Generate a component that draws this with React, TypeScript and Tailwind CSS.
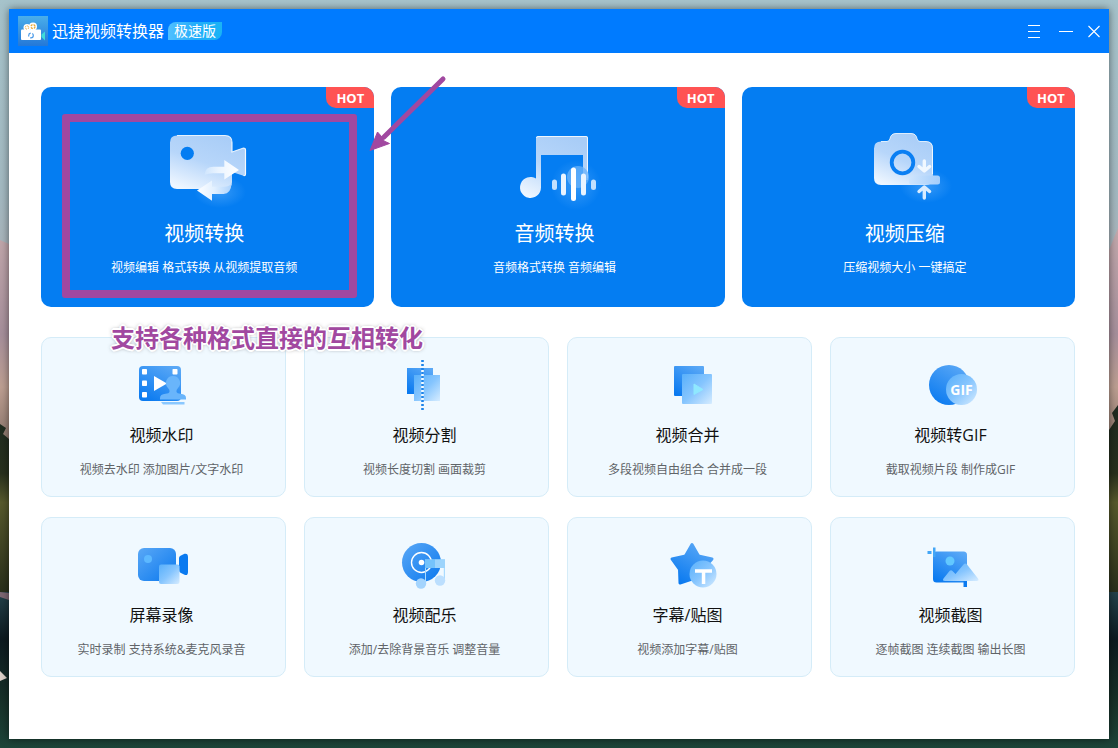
import type { ReactNode } from 'react'

type Tool = {
  title: string
  desc: string
  icon: ReactNode
}

function Wallpaper() {
  return (
    <svg
      className="absolute inset-0 h-full w-full"
      viewBox="0 0 1118 748"
      preserveAspectRatio="none"
      aria-hidden="true"
    >
      <defs>
        <linearGradient id="sky" x1="0" y1="0" x2="0" y2="1">
          <stop offset="0" stopColor="#a6c3cb" />
          <stop offset="0.25" stopColor="#a3b9c1" />
          <stop offset="0.32" stopColor="#a7b4bb" />
        </linearGradient>
        <linearGradient id="rock" x1="0" y1="0" x2="0" y2="1">
          <stop offset="0" stopColor="#c3a9ac" />
          <stop offset="0.5" stopColor="#a68f9b" />
          <stop offset="0.75" stopColor="#bd9f92" />
          <stop offset="1" stopColor="#8d776c" />
        </linearGradient>
        <linearGradient id="trees" x1="0" y1="0" x2="0" y2="1">
          <stop offset="0" stopColor="#1d2a20" />
          <stop offset="0.35" stopColor="#28301d" />
          <stop offset="0.5" stopColor="#57592c" />
          <stop offset="1" stopColor="#252b19" />
        </linearGradient>
        <linearGradient id="lake" x1="0" y1="0" x2="0" y2="1">
          <stop offset="0" stopColor="#24424b" />
          <stop offset="0.3" stopColor="#0d1a20" />
          <stop offset="0.7" stopColor="#183129" />
          <stop offset="1" stopColor="#1d4539" />
        </linearGradient>
      </defs>
      <rect width="1118" height="748" fill="url(#sky)" />
      <path d="M0 240l9 4V440H0zM1118 228l-9 22V440h9z" fill="url(#rock)" />
      <path d="M0 424l6 4-3 6 6 5V600H0zM1118 405l-6 8 3 8-6 9V600h9z" fill="url(#trees)" />
      <path d="M0 592h1118v156H0z" fill="url(#lake)" />
      <path d="M0 592l9 1v7l-9-3z" fill="#7d6672" />
      <path d="M0 671l7 7-7 3z" fill="#dccfc8" />
    </svg>
  )
}

/* Gradients shared by every icon on the page */
function IconDefs() {
  return (
    <svg className="absolute h-0 w-0" aria-hidden="true">
      <defs>
        <linearGradient id="frost" x1="0.7" y1="0" x2="0.2" y2="1">
          <stop offset="0" stopColor="#a9cdf7" />
          <stop offset="0.5" stopColor="#b7d6fa" />
          <stop offset="1" stopColor="#eef6ff" />
        </linearGradient>
        <linearGradient id="arrow" x1="0" y1="0" x2="1" y2="0">
          <stop offset="0" stopColor="#cfe5fd" />
          <stop offset="0.4" stopColor="#eaf4ff" />
          <stop offset="1" stopColor="#ffffff" />
        </linearGradient>
        <linearGradient id="arrowBack" x1="0" y1="0" x2="1" y2="0">
          <stop offset="0" stopColor="#ffffff" />
          <stop offset="0.5" stopColor="#e2f0ff" />
          <stop offset="1" stopColor="#aed3fc" />
        </linearGradient>
        <linearGradient id="plate" x1="0" y1="0" x2="1" y2="0">
          <stop offset="0" stopColor="#cfe5fd" />
          <stop offset="1" stopColor="#a3cdfb" />
        </linearGradient>
        <linearGradient id="blue" x1="0" y1="0" x2="1" y2="1">
          <stop offset="0" stopColor="#5aa8f6" />
          <stop offset="1" stopColor="#0a78ee" />
        </linearGradient>
        <linearGradient id="blueDown" x1="0.8" y1="0" x2="0.2" y2="1">
          <stop offset="0" stopColor="#5aa8f6" />
          <stop offset="1" stopColor="#0a7af0" />
        </linearGradient>
        <linearGradient id="pale" x1="0" y1="0" x2="1" y2="1">
          <stop offset="0" stopColor="#58b0fb" />
          <stop offset="0.5" stopColor="#86c5fe" />
          <stop offset="1" stopColor="#d6ecff" />
        </linearGradient>
        <radialGradient id="halo">
          <stop offset="0" stopColor="#7cc0ff" stopOpacity="0.4" />
          <stop offset="1" stopColor="#7cc0ff" stopOpacity="0" />
        </radialGradient>
      </defs>
    </svg>
  )
}

function ConvertIcon() {
  return (
    <svg className="h-24 w-[120px]" viewBox="0 1 120 96" fill="none">
      <ellipse cx="76" cy="72" rx="26" ry="16" fill="url(#halo)" />
      <path
        d="M33 15.500h48q7 0 7 7v9.500l11.500-4q2.500-.5 2.500 2v24q0 2.500-2.500 1.800L88 52v10q0 7-7 7H33q-7 0-7-7V22.500q0-7 7-7z"
        fill="url(#frost)"
      />
      <path d="M33 15.500h48q7 0 7 7v9.500l11.500-4q2 0 2 2v24q0 2-2 1.500" stroke="#fff" strokeOpacity=".85" strokeWidth="1.200" />
      <circle cx="43.300" cy="33.300" r="6.600" fill="#047df2" />
      <path d="M60.500 55q.5-8.300 9-8.300h10.800V40L95 50l-14.700 9.500v-6.200H69q-5 0-8.500 1.700z" fill="url(#arrow)" />
      <path d="M53 70.500L68 60.500v6.200h12q5 0 7.500-3-.5 10-8 10.300H68v6.700z" fill="url(#arrowBack)" />
    </svg>
  )
}

function AudioIcon() {
  return (
    <svg className="h-24 w-[120px]" viewBox="-6 1 120 96" fill="none">
      <circle cx="76" cy="65" r="25" fill="url(#halo)" />
      <path
        d="M38 16h48q2 0 2 2v42h-5V35H41v32.500A10.500 10.500 0 1 1 36 58.500V18q0-2 2-2z"
        fill="url(#frost)"
      />
      <path d="M36.500 18q0-1.500 1.500-1.500h48q1.500 0 1.500 1.500v40" stroke="#fff" strokeOpacity=".8" />
      <circle cx="78" cy="57" r="11" fill="#6ab3fb" fillOpacity=".75" />
      <g stroke="#e9f4ff" strokeWidth="5" strokeLinecap="round">
        <path d="M54.500 62v5.500M93.500 62v5.500" stroke="#c2e0fe" />
        <path d="M63.500 56v17M83.500 56v17" />
        <path d="M73.500 50v28.500" stroke="#fff" />
      </g>
    </svg>
  )
}

function CompressIcon() {
  return (
    <svg className="h-24 w-[120px]" viewBox="-5 1 120 96" fill="none">
      <ellipse cx="76" cy="66" rx="26" ry="17" fill="url(#halo)" />
      <path
        d="M31 21.500h6q2.500 0 3-3 1-5 6-5h15q5 0 6 5 .5 3 3 3h6q7 0 7 7V58q0 7-7 7H31q-7 0-7-7V28.500q0-7 7-7z"
        fill="url(#frost)"
      />
      <path d="M31 21.500h6q2.500 0 3-3 1-5 6-5h15q5 0 6 5 .5 3 3 3h6q6.500 0 6.500 7V54" stroke="#fff" strokeOpacity=".8" />
      <circle cx="52.500" cy="42.500" r="10.800" stroke="#0a7ff3" strokeWidth="3.800" />
      <rect x="59" y="55.500" width="31" height="9" rx="2.500" fill="url(#plate)" />
      <g stroke="#fff" strokeWidth="3.400" strokeLinecap="round" strokeLinejoin="round">
        <path d="M74.300 41v9.500M69 46.500l5.300 4.500 5.300-4.500" stroke="#f1f8ff" />
        <path d="M74.300 78V68.500M69 71.500l5.300-4.500 5.300 4.500" stroke="#d9ecff" />
      </g>
    </svg>
  )
}

function WatermarkIcon() {
  return (
    <svg className="h-[60px] w-20" viewBox="2 5 80 60">
      <rect x="19" y="16" width="42" height="35" rx="4" fill="url(#blueDown)" />
      <g fill="#fff">
        <rect x="22" y="19" width="5" height="5.500" rx=".8" />
        <rect x="22" y="30.500" width="5" height="5.500" rx=".8" />
        <rect x="22" y="42" width="5" height="5.500" rx=".8" />
        <rect x="52.500" y="19" width="5" height="5.500" rx=".8" />
        <path d="M34 26l13 7.500L34 41z" />
      </g>
      <path
        d="M53 26a7 7 0 0 1 5 12q-2 2-1.500 4 .5 1.500 4 1.700 5.500.3 5.500 4.300v1.500H40V48q0-4 5.500-4.300 3.500-.2 4-1.700.5-2-1.500-4a7 7 0 0 1 5-12z"
        fill="#69b5fb"
      />
      <path d="M41 52h23.500v2.500H43z" fill="#8ac8ff" />
    </svg>
  )
}

function SplitIcon() {
  return (
    <svg className="h-[60px] w-20" viewBox="0 5 80 60">
      <rect x="22" y="18" width="26" height="26" fill="url(#blueDown)" />
      <rect x="29" y="25" width="26" height="26" fill="url(#pale)" />
      <path d="M37.500 20v31" stroke="#f1f9ff" strokeWidth="2.600" />
      <path d="M37.500 10v50" stroke="#1d84ea" strokeWidth="2.600" strokeDasharray="2 2" />
    </svg>
  )
}

function MergeIcon() {
  return (
    <svg className="h-[60px] w-20" viewBox="-2 5 80 60">
      <rect x="24" y="16" width="30" height="30" rx="1" fill="url(#blueDown)" />
      <rect x="32" y="24" width="30" height="30" rx="1" fill="url(#pale)" />
      <path d="M44 34l9 5.500-9 5z" fill="#8fe8ff" stroke="#8fe8ff" strokeLinejoin="round" />
    </svg>
  )
}

function GifIcon() {
  return (
    <svg className="h-[60px] w-20" viewBox="1 5 80 60">
      <circle cx="39" cy="35" r="20" fill="url(#blueDown)" />
      <circle cx="51.500" cy="39.500" r="15.500" fill="url(#pale)" />
      <text x="51.500" y="45" textAnchor="middle" fill="#fff" className="font-['Open_Sans',sans-serif] text-[14px] font-bold">
        GIF
      </text>
    </svg>
  )
}

function RecordIcon() {
  return (
    <svg className="h-[60px] w-20" viewBox="2 5 80 60">
      <rect x="18" y="18" width="38" height="33" rx="6" fill="url(#blue)" />
      <circle cx="28" cy="29" r="4" fill="#5cb8ff" />
      <path d="M59 28q0-1.500 1.500-2.200l4-2Q68 23 68 27v15q0 4-3.500 2.800l-4-2Q59 42 59 40z" fill="#0a7af0" />
      <rect x="39" y="34.500" width="20.500" height="19.500" rx="2" fill="url(#pale)" />
    </svg>
  )
}

function MusicIcon() {
  return (
    <svg className="h-[60px] w-20" viewBox="5 5 80 60">
      <circle cx="41.500" cy="32.500" r="19.500" fill="url(#blue)" />
      <circle cx="41.500" cy="32.500" r="10" fill="none" stroke="#fff" strokeWidth="1.400" />
      <circle cx="41.500" cy="32.500" r="2.800" fill="#fff" />
      <path d="M45 29.500h20V51h-1.200V38H46v16h-1z" fill="#a9dbff" />
      <path d="M45 29.500h20V38H45z" fill="#75c3fb" />
      <path d="M55 29.500h10V38H55z" fill="#b5e0fd" fillOpacity=".6" />
      <circle cx="41" cy="53.500" r="5.200" fill="#a4d4fd" />
      <circle cx="60" cy="50.500" r="5.200" fill="#bcdffe" />
    </svg>
  )
}

function StickerIcon() {
  return (
    <svg className="h-[60px] w-20" viewBox="-2 5 80 60">
      <path
        d="M42 14.500l6 10.500q.5 1 1.500 1.200L62 29l-8.500 9.500L54 50l-12-1-12 4-.5-13.500L22 29l12.500-2.800q1-.2 1.500-1.200z"
        fill="url(#blueDown)"
        stroke="url(#blueDown)"
        strokeWidth="3"
        strokeLinejoin="round"
      />
      <circle cx="53" cy="44" r="13.500" fill="url(#pale)" />
      <path d="M45 39.200h17v3.500h-6.700V54h-3.500V42.700H45z" fill="#fff" />
    </svg>
  )
}

function ScreenshotIcon() {
  return (
    <svg className="h-[60px] w-20" viewBox="0 5 80 60">
      <rect x="22" y="21.500" width="34" height="31" rx="3.500" fill="url(#blueDown)" />
      <path d="M22 17.500h2.500V27H22zM16.500 21h4v3h-4z" fill="#42a6f6" />
      <path d="M52.500 50H56v7h-3.500z" fill="#0a7af0" />
      <circle cx="39" cy="31" r="4.500" fill="#62c8ff" />
      <path
        d="M32.500 48.500l6-7.500q1.500-1.500 3 0l3 3 8-9.500q1.800-2 3.500 0l11 14q1.500 2.500-1.500 2.500H34q-3 0-1.500-2.500z"
        fill="url(#pale)"
      />
    </svg>
  )
}

function AppLogo() {
  return (
    <svg className="h-[30px] w-[30px]" viewBox="0 0 30 30" aria-hidden="true">
      <defs>
        <linearGradient id="logoBg" x1="0" y1="0" x2="0" y2="1">
          <stop offset="0" stopColor="#4aaeea" />
          <stop offset="1" stopColor="#2478d8" />
        </linearGradient>
      </defs>
      <rect width="30" height="30" fill="url(#logoBg)" />
      <circle cx="9" cy="11.500" r="3.500" fill="#fff" />
      <circle cx="15" cy="10.500" r="4" fill="#fff" />
      <rect x="3" y="13.500" width="20" height="10.500" rx="1" fill="#fff" />
      <path d="M27 15.500v9L23.500 21v-2.500z" fill="#3fdcd8" />
      <circle cx="9" cy="11.500" r="1.700" fill="none" stroke="#e8a934" strokeDasharray="1.500 1" />
      <circle cx="15" cy="10.500" r="2" fill="none" stroke="#e8a934" strokeWidth="1.300" strokeDasharray="2 1" />
      <circle cx="13" cy="19.500" r="2.300" fill="none" stroke="#4c9be8" strokeWidth="1.200" strokeDasharray="4 1.500" />
    </svg>
  )
}

const featured: Tool[] = [
  { title: '视频转换', desc: '视频编辑 格式转换 从视频提取音频', icon: <ConvertIcon /> },
  { title: '音频转换', desc: '音频格式转换 音频编辑', icon: <AudioIcon /> },
  { title: '视频压缩', desc: '压缩视频大小 一键搞定', icon: <CompressIcon /> },
]

const tools: Tool[] = [
  { title: '视频水印', desc: '视频去水印 添加图片/文字水印', icon: <WatermarkIcon /> },
  { title: '视频分割', desc: '视频长度切割 画面裁剪', icon: <SplitIcon /> },
  { title: '视频合并', desc: '多段视频自由组合 合并成一段', icon: <MergeIcon /> },
  { title: '视频转GIF', desc: '截取视频片段 制作成GIF', icon: <GifIcon /> },
  { title: '屏幕录像', desc: '实时录制 支持系统&麦克风录音', icon: <RecordIcon /> },
  { title: '视频配乐', desc: '添加/去除背景音乐 调整音量', icon: <MusicIcon /> },
  { title: '字幕/贴图', desc: '视频添加字幕/贴图', icon: <StickerIcon /> },
  { title: '视频截图', desc: '逐帧截图 连续截图 输出长图', icon: <ScreenshotIcon /> },
]

function TitleBar() {
  return (
    <header className="flex h-11 items-center bg-[#007bff] pr-[7px] pl-[9px] text-white">
      <AppLogo />
      <h1 className="ml-1 text-[16px] leading-6">迅捷视频转换器</h1>
      <span className="ml-1 rounded-tl-lg rounded-br-lg bg-linear-to-r from-[#4fc0ff] via-[#22adfb] to-[#19b4f5] px-1.5 text-[14px] leading-[18px]">
        极速版
      </span>
      <div className="ml-auto flex items-center gap-4">
        <button type="button" aria-label="菜单">
          <svg className="h-4 w-4" viewBox="0 0 16 16" stroke="#fff" shapeRendering="crispEdges">
            <path d="M2 2.500h12M2 8.500h12M2 14.500h12" />
          </svg>
        </button>
        <button type="button" aria-label="最小化">
          <svg className="h-4 w-4" viewBox="0 0 16 16" stroke="#fff" shapeRendering="crispEdges">
            <path d="M1 8.500h14" />
          </svg>
        </button>
        <button type="button" aria-label="关闭" className="-ml-1">
          <svg className="h-4 w-4" viewBox="0 0 16 16" stroke="#fff" strokeWidth="1.100">
            <path d="M2.500 3l11 11M13.500 3l-11 11" />
          </svg>
        </button>
      </div>
    </header>
  )
}

function FeaturedCard({ tool }: { tool: Tool }) {
  return (
    <button
      type="button"
      className="relative flex h-[220px] w-full flex-col items-center rounded-[10px] bg-[#047df2] pt-[34px] pr-[7px] text-white"
    >
      {tool.icon}
      <span className="text-[20px] leading-[34px]">{tool.title}</span>
      <span className="mt-[9px] text-[12px] leading-4">{tool.desc}</span>
      <span className="absolute top-0 right-0 h-[21px] w-12 rounded-tr-[10px] rounded-bl-[10px] bg-[#ff5353] text-center font-['Open_Sans',sans-serif] text-[13px] leading-[22px] font-bold">
        HOT
      </span>
    </button>
  )
}

function ToolCard({ tool }: { tool: Tool }) {
  return (
    <button
      type="button"
      className="flex h-40 flex-col items-center rounded-[10px] border border-[#d5ecf8] bg-[#f0f9ff] pt-[17px] pr-1"
    >
      {tool.icon}
      <span className="mt-2 text-[16px] leading-6 text-[#111]">{tool.title}</span>
      <span className="mt-[15px] text-[12px] leading-4 text-[#606468]">{tool.desc}</span>
    </button>
  )
}

/* Marker box, arrow and caption drawn over the first featured card */
function Annotation() {
  return (
    <div className="pointer-events-none absolute inset-0 z-10">
      <div className="absolute top-[27px] right-[17px] bottom-[9px] left-[21px] rounded-[3px] border-8 border-[#a148a0]" />
      <svg className="absolute -top-3 left-[326px] h-20 w-20" viewBox="0 0 80 80" fill="#a148a0">
        <path d="M76 4L17 62" stroke="#a148a0" strokeWidth="5" strokeLinecap="round" />
        <path d="M3 75.500L10.500 57l4.500 5 2 4 5.500 2.500z" stroke="#a148a0" strokeLinejoin="round" />
      </svg>
      <p className="absolute top-[235px] left-[70px] text-[24px] leading-8 font-bold whitespace-nowrap text-[#a148a0] [text-shadow:1px_1px_0_#fff,-1px_-1px_0_#fff,1px_-1px_0_#fff,-1px_1px_0_#fff,2px_0_0_#fff,-2px_0_0_#fff,0_2px_0_#fff,0_-2px_0_#fff,0_0_4px_#555]">
        支持各种格式直接的互相转化
      </p>
    </div>
  )
}

export default function App() {
  return (
    <div className="relative flex min-h-screen p-[9px] font-['Open_Sans','Noto_Sans_CJK_SC',sans-serif]">
      <Wallpaper />
      <IconDefs />
      <div className="relative flex min-w-0 flex-1 flex-col bg-white shadow-[0_0_8px_rgba(0,0,0,0.5)]">
        <TitleBar />
        <main className="flex-1 pt-[34px] pr-[34px] pb-8 pl-8">
          <section className="grid grid-cols-3 gap-[17px]">
            {featured.map((tool, i) => (
              <div key={tool.title} className="relative">
                <FeaturedCard tool={tool} />
                {i === 0 && <Annotation />}
              </div>
            ))}
          </section>
          <section className="mt-[30px] grid grid-cols-4 gap-x-[18px] gap-y-5">
            {tools.map((tool) => (
              <ToolCard key={tool.title} tool={tool} />
            ))}
          </section>
        </main>
      </div>
    </div>
  )
}
